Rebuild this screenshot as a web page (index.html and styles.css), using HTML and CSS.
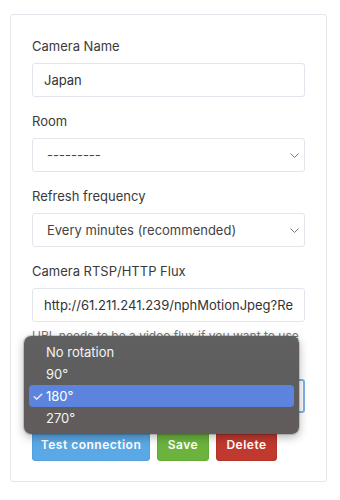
FILE: index.html
```html
<!DOCTYPE html>
<html lang="en">
<head>
<meta charset="UTF-8" />
<meta name="viewport" content="width=device-width, initial-scale=1" />
<title>Camera</title>
<link rel="stylesheet" href="styles.css">
</head>
<body>

<div class="card">
  <div class="field">
    <label>Camera Name</label>
    <input class="control" type="text" value="Japan" />
  </div>
  <div class="field">
    <label>Room</label>
    <select class="control">
      <option>---------</option>
    </select>
  </div>
  <div class="field">
    <label>Refresh frequency</label>
    <select class="control">
      <option>Every minutes (recommended)</option>
    </select>
  </div>
  <div class="field">
    <label>Camera RTSP/HTTP Flux</label>
    <input class="control" type="text" value="http://61.211.241.239/nphMotionJpeg?Resolution=640x480&amp;Quality=Standard" />
    <p class="help">URL needs to be a video flux if you want to use</p>
  </div>
  <div class="field rotation">
    <label>Rotation</label>
    <select class="control focused">
      <option>180°</option>
    </select>

    <ul class="menu">
      <li>No rotation</li>
      <li>90°</li>
      <li class="selected"><span class="check">✓</span>180°</li>
      <li>270°</li>
    </ul>
  </div>

  <div class="actions">
    <button class="btn btn-blue">Test connection</button>
    <button class="btn btn-green">Save</button>
    <button class="btn btn-red">Delete</button>
  </div>
</div>

</body>
</html>
```

FILE: styles.css
```css
body {
  margin: 0;
  background-color: #fff;
  font-family: Inter, "Noto Sans", sans-serif;
  color: #333;
}
.card {
  box-sizing: border-box;
  width: 317px;
  margin: 14px 0 0 10px;
  padding: 22px 21px 20px;
  border: 1px solid #e3e6ec;
  border-radius: 3px;
}
.field {
  margin-bottom: 15px;
}
.field label {
  display: block;
  font-size: 13px;
  line-height: 18px;
  margin-bottom: 8px;
  color: #3a3a3a;
}
.control {
  display: block;
  box-sizing: border-box;
  width: 100%;
  height: 34px;
  padding: 0 11px;
  border: 1px solid #e1e5ec;
  border-radius: 3px;
  background-color: #fff;
  font-family: inherit;
  font-size: 13px;
  color: #333;
  outline: none;
}
select.control {
  appearance: none;
  -webkit-appearance: none;
  padding-left: 14px;
  color: #444;
  background-image: url("data:image/svg+xml;utf8,<svg xmlns='http://www.w3.org/2000/svg' width='9' height='5' viewBox='0 0 9 5'><path d='M.5.5l4 4 4-4' fill='none' stroke='%23777' stroke-width='1'/></svg>");
  background-repeat: no-repeat;
  background-position: right 5px center;
}
.control.focused {
  border: 2px solid #7fb2ec;
}
.help {
  margin: 6px 0 0;
  font-size: 12px;
  line-height: 16px;
  color: #777;
  white-space: nowrap;
}
.rotation {
  position: relative;
  margin-top: -6px;
}
.menu {
  position: absolute;
  left: -8px;
  top: -17px;
  width: 275px;
  margin: 0;
  padding: 5px 5px;
  box-sizing: border-box;
  list-style: none;
  background: linear-gradient(180deg, #606060 0%, #5e5c5c 70%, #635b5b 100%);
  border-radius: 7px;
  box-shadow: 0 3px 10px rgba(0, 0, 0, 0.3), 0 0 0 1px rgba(0, 0, 0, 0.15);
  z-index: 2;
}
.menu li {
  position: relative;
  height: 22px;
  line-height: 22px;
  padding-left: 17px;
  font-size: 13px;
  color: #f4f4f4;
  border-radius: 4px;
}
.menu li.selected {
  background-color: #5c84df;
  color: #fff;
}
.check {
  position: absolute;
  left: 3px;
  top: 0;
  font-size: 13px;
}
.actions {
  display: flex;
  gap: 7px;
  margin-top: -1px;
}
.btn {
  height: 34px;
  padding: 0;
  border: 1px solid transparent;
  border-radius: 3px;
  font-family: inherit;
  font-size: 12px;
  font-weight: 600;
  letter-spacing: 0.5px;
  white-space: nowrap;
  color: #fff;
}
.btn-blue {
  width: 118px;
  background-color: #5aa8e6;
  border-color: #529fdd;
}
.btn-green {
  width: 52px;
  background-color: #6cb33e;
  border-color: #64aa37;
}
.btn-red {
  width: 61px;
  background-color: #c0392e;
  border-color: #b53428;
}
```
